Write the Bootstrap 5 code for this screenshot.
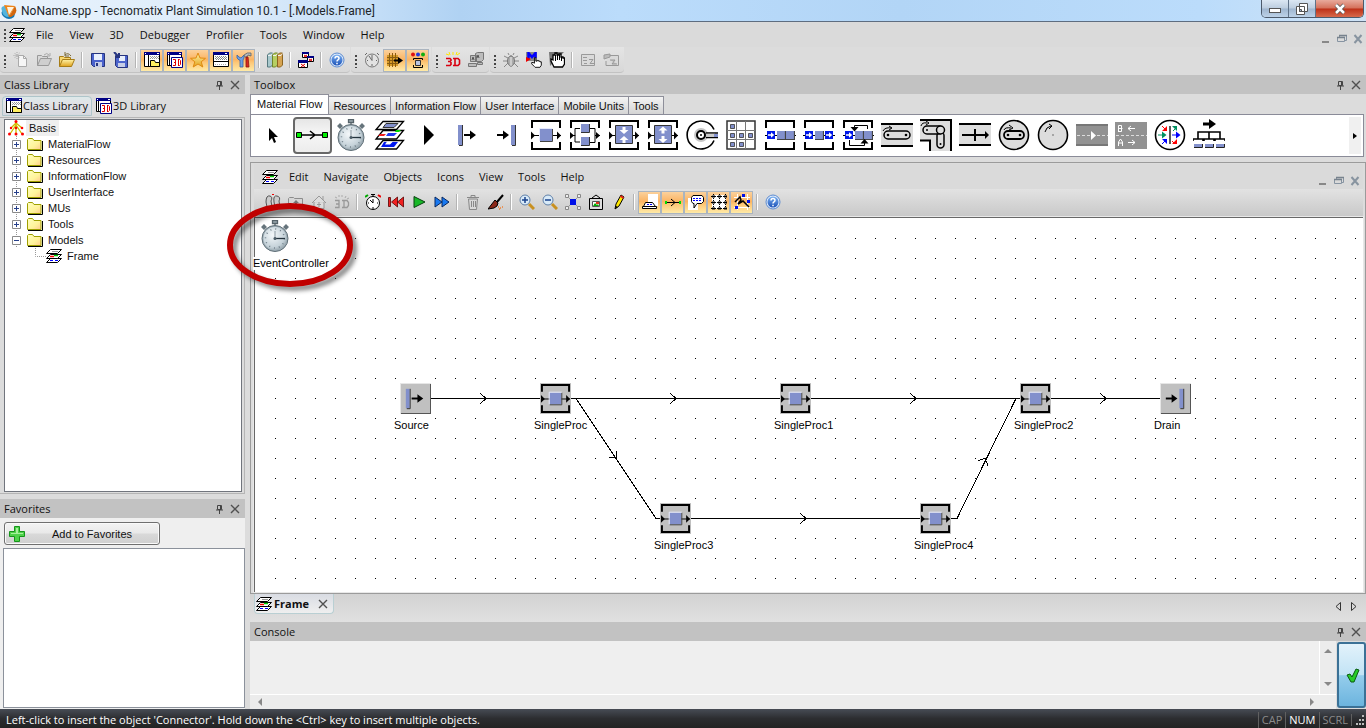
<!DOCTYPE html>
<html lang="en">
<head>
<meta charset="utf-8">
<meta name="viewport" content="width=device-width, initial-scale=1">
<title>NoName.spp - Tecnomatix Plant Simulation 10.1</title>
<link href="https://cdn.jsdelivr.net/npm/bootstrap@5.3.0/dist/css/bootstrap.min.css" rel="stylesheet">
<style>
:root{--ui:"Open Sans","Noto Sans",sans-serif;--classic:"Liberation Sans",Arial,sans-serif}
body{font-family:var(--ui);font-size:11px;line-height:16px;color:#111;background:#dcdcdc}
svg{display:block;flex:none;overflow:visible}
.ic{width:16px;height:16px}
.plain{border:0;background:none;padding:0;display:flex;align-items:center;justify-content:center;width:16px;height:16px}

/* title bar */
.titlebar{height:22px;font-family:Roboto,var(--ui);font-size:12px;padding-left:1px;border-bottom:1px solid #5e6d80;background:linear-gradient(90deg,#e9f3fc 0,#dcebfa 240px,#c2ddf7 380px,#b0d2f3 460px,#bbdcfb 620px,#b2d5f6 900px,#bbdcfb 1200px,#cfe3f6 100%)}
.winbtns{height:18px;margin-right:2px;border:1px solid #4c5a6b;border-top:0;border-radius:0 0 5px 5px;overflow:hidden}
.winbtns button{border:0;padding:0;height:17px;width:27px;border-right:1px solid #5f7288;background:linear-gradient(#dbe7f3,#bccddf 48%,#9fb6cf 52%,#bdd2e8);display:flex;align-items:center;justify-content:center}
.winbtns button:last-child{width:47px;border-right:0;background:linear-gradient(#e8aa9c,#d4705a 48%,#bd3018 52%,#d7694b)}

/* menus and toolbars */
.menurow{height:25px;background:#dadada}
.menurow .nav{gap:2px}
.framewin .menurow .nav{gap:1px}
.menurow .nav-link{padding:0 7px;color:#111;line-height:24px}
.grip{width:9px;height:14px;align-self:center;background:radial-gradient(circle,#444 1px,transparent 1px) 3px 0/4px 4px repeat-y}
.toolrow{height:27px;background:#dcdcdc}
.band{height:26px;padding:2px 2px 0 0;background:linear-gradient(#e4e4e4,#d8d8d8);border-bottom:1px solid #c2c2c2;border-radius:0 0 4px 4px;margin-right:1px}
.tool{width:23px;height:23px;padding:2px 0 0 3px;border:1px solid transparent;border-radius:0;background:none;display:flex}
.tool.on{border-color:#aab4bf;background:linear-gradient(#fbd19c,#fbb463 45%,#fdc878 60%,#ffeaa6)}
.vsep{width:8px;height:16px;border:0;opacity:1;margin:3px 0 0;background:linear-gradient(90deg,transparent 3px,#b4b4b4 3px 4px,#fff 4px 5px,transparent 5px)}

/* docked panes */
.side{width:245px}
.desk{min-height:0;padding-top:1px}
.panehead{height:19px;flex:none;padding:0 2px 0 4px;background:#c2c2c2}
.panehead h2{font-size:11px;line-height:18px;margin:0;font-weight:400}
.sidetabs{height:21px;margin-top:2px;padding-left:2px}
.sidetabs .nav-link{padding:0 3px 0 3px;height:20px;color:#111;border:1px solid transparent;display:flex;align-items:center;gap:1px;white-space:nowrap}
.sidetabs .nav-link.active{background:linear-gradient(#dde9ea,#e2e2e6 40%,#d6d8df);border-color:#aec5ca;border-radius:4px 4px 0 0}
.treebox{border:1px solid #b5b5b5;padding:1px;border-left:0}
.tree{background:#fff;border:1px solid #71757d;font-family:var(--classic);margin:0 1px 0 3px}
.tree ul{list-style:none;margin:0;padding:0}
.tree li>div{height:16px;display:flex;align-items:center;padding-left:3px}
.tree span{padding-left:5px}
.tree .rootname{background:#efefef;padding:0 3px;margin-left:2px}
.tree .branch div{padding-left:7px}
.branch{background:repeating-linear-gradient(#999 0 1px,transparent 1px 2px) 11px 0/1px 112px no-repeat}
.knob{width:9px;height:9px;margin-right:6px}
.elbow{margin-left:23px}
.favpane{height:210px;margin-top:5px;background:#efefef}
.addfav{width:156px;height:23px;margin:4px 0 3px 4px;padding:0;font-size:11px;line-height:16px;font-family:var(--classic);border:1px solid #6f6f6f;border-radius:3px;background:linear-gradient(#f3f3f3,#e9e9e9 48%,#d9d9d9 52%,#cfcfcf);box-shadow:inset 0 0 0 1px #fafafa;display:flex;align-items:center;color:#111}
.favlist{background:#fff;border:1px solid #8b919b;margin:0 0 1px 3px}

/* toolbox */
.work{min-width:0;margin-left:1px}
.tbtabs{height:20px;font-family:var(--classic)}
.tbtabs .nav-link{height:18px;line-height:18px;padding:0 4px;color:#111;border:1px solid #8e8f9a;border-bottom:0;background:linear-gradient(#f4f4f4,#e4e4e4 50%,#d4d4d4);white-space:nowrap}
.tbtabs .nav-item+.nav-item .nav-link{border-left:0}
.tbtabs .nav-link.active{height:20px;line-height:18px;padding:0 6px;background:#fff;border-color:#8e8f9a}
.toolbox{height:43px;margin-right:2px;background:#fff;border:1px solid #8a8b98;padding:2px 2px 2px 3px}
.pal{width:39px;height:37px;flex:none;padding:0 0 0 1px;border:2px solid transparent;border-radius:4px;background:none;display:flex}
.pal.on{border-color:#686868;background:linear-gradient(#e6e6e6,#f6f6f6 45%,#ececec)}
.pal svg{width:32px;height:32px}
.more{width:12px;border:0;padding:0;background:#f0f0f0;display:flex;align-items:center;justify-content:center}

/* frame window */
.framewin{margin-top:5px;border:1px solid #9b9b9b;padding:1px 2px 1px 3px;background:#dcdcdc}
.frametools{height:28px;padding:2px 0 0 7px;background:linear-gradient(#e2e2e2,#c8c8c8)}
.plane{position:relative;background:#fff;border:solid #686868;border-width:1px 0 0 1px;box-shadow:0 0 0 1px #e8e8e8}
.wires{position:absolute;left:0;top:0;width:100%;height:100%}
.node{position:absolute;left:var(--x);top:var(--y);font-family:var(--classic);color:#000}
.node svg{width:32px;height:32px}
.node .tile{width:31px;height:31px;background:#c0c0c0}
.node .edge{box-shadow:inset 1px 1px #e6e6e6,inset -1px -1px #555}
.node span{display:block;background:#fff;margin:5px 0 0 -6px;line-height:13px;height:13px;white-space:nowrap}
.ring{position:absolute;left:-32px;top:-20px;z-index:5;pointer-events:none;filter:drop-shadow(4px 4px 2px rgba(0,0,0,.45))}
.doctabs{height:28px;padding:0 4px 0 4px;background:linear-gradient(#d2d2d2,#e0e0e0)}
.doctab{height:20px;padding:0 2px 0 1px;gap:2px;border:1px solid #b9cfd3;border-top:0;border-radius:0 0 4px 4px;background:linear-gradient(#d9dce3,#efefef);font-weight:700}

/* console and status bar */
.console{height:87px}
.consoletext{border:0;resize:none;background:#efefef;padding:2px;outline:0;width:100%}
.sb{background:#ececec}
.hbar{height:15px;padding-right:22px}
.okbtn{width:29px;margin:1px 0 1px 1px;padding:0;border:2px solid #3b7196;border-radius:3px;background:linear-gradient(#e2f2fb,#c2e3f5 50%,#95cdec 51%,#6cb4de);display:flex;align-items:center;justify-content:center}
.status{height:19px;background:linear-gradient(#474c55,#2c2d30 50%,#232323);color:#fff;padding:2px 0 0 6px}
.status .key{color:#8b8b8b;border-left:1px solid #606060;padding:0 3px;line-height:16px}
.status .key:last-child{padding:0 0 0 2px}
</style>
</head>
<body class="d-flex flex-column vh-100 overflow-hidden">

<svg width="0" height="0" class="position-absolute" aria-hidden="true"><defs>
<radialGradient id="g-glass" cx=".4" cy=".35" r=".75"><stop offset="0" stop-color="#f4f8fa"/><stop offset=".7" stop-color="#c5d2d9"/><stop offset="1" stop-color="#8b9aa2"/></radialGradient>
<linearGradient id="g-gold" x2="0" y2="1"><stop stop-color="#fff3a8"/><stop offset="1" stop-color="#e0a21c"/></linearGradient>
<linearGradient id="g-help" x2="0" y2="1"><stop stop-color="#7db2f2"/><stop offset="1" stop-color="#1b52b8"/></linearGradient>
<linearGradient id="g-fold" x2="1" y2="1"><stop stop-color="#ffffc0"/><stop offset=".6" stop-color="#fff39a"/><stop offset="1" stop-color="#ffc890"/></linearGradient>

<symbol id="i-logo" viewBox="0 0 16 16"><path d="M3 5Q-2 10 3 14q5 4 10 0l1-3-6 1z" fill="#1478b4"/><path d="M1 8q-2-5 3-5l4 11q-6 0-7-6z" fill="#54b4dc"/><path d="M3 2l11 1-6 11z" fill="#ef8418"/><path d="M6 4l7 0-5 8z" fill="#fff3dc"/><path d="M14 3q4 7-4 11l-2 0z" fill="#d4680e"/></symbol>
<symbol id="i-frame" viewBox="0 0 16 16"><g stroke="#000" fill="#fff"><path d="M4.500 10.500h11l-4 4h-11z"/><path d="M4.500 6.500h11l-4 4h-11z"/><path d="M4.500 1.500h11l-4 4h-11z"/></g><path d="M6 3.500h6" stroke="#999"/><path d="M4 8.500h4" stroke="#f00" stroke-width="1.500"/><path d="M8 7.500h4" stroke="#0c0" stroke-width="1.500"/><path d="M4 12.500h3m2 0h3" stroke="#00f"/></symbol>
<symbol id="i-new" viewBox="0 0 16 16"><path d="M5.500 3.500h5l3 3v8h-8z" fill="#f6f6f6" stroke="#aaa"/><path d="M10.500 3.500v3h3" fill="none" stroke="#aaa"/><path d="M4 0v7M.5 3.500h7M1.500 1l5 5m0-5l-5 5" stroke="#a8a8a8" stroke-dasharray="1 1"/></symbol>
<symbol id="i-opengray" viewBox="0 0 16 16"><path d="M1.500 13.500v-10h4l1 1h5v2" fill="#d8d8d8" stroke="#999"/><path d="M1.500 13.500l3-7h11l-3 7z" fill="#cfcfcf" stroke="#999"/><path d="M8 3q3-3 5 0m1-2v3h-3" fill="none" stroke="#aaa"/></symbol>
<symbol id="i-open" viewBox="0 0 16 16"><path d="M.5 14.500v-10h4l1 1h6v3" fill="#f7d66e" stroke="#a67c17"/><path d="M.5 14.500l3-7h12l-3 7z" fill="url(#g-gold)" stroke="#a67c17"/><path d="M6 3q3-3 6 1m-6-4v4h4" fill="none" stroke="#7b6a38"/></symbol>
<symbol id="i-save" viewBox="0 0 16 16"><path d="M1.500 1.500h13v13h-11l-2-2z" fill="#4a62cc" stroke="#26347f"/><path d="M4 2h8v6H4z" fill="#e8effc"/><path d="M5 10h7v5H5z" fill="#c6cde6"/><path d="M6 11h2v3H6z" fill="#26347f"/></symbol>
<symbol id="i-saveas" viewBox="0 0 16 16"><path d="M2.500 3.500h12v12h-10l-2-2z" fill="#4c64cc" stroke="#26347f"/><path d="M6 4h6v5H6z" fill="#e8effc"/><path d="M5 11h7v4H5z" fill="#c6cde6"/><path d="M1 0l5 5m0-4v4H2" stroke="#26347f" stroke-width="2" fill="none"/></symbol>
<symbol id="i-lib" viewBox="0 0 16 16"><path d="M.5.5h15v14H.5z" fill="#fff" stroke="#000"/><path d="M0 0h16v3H0z" fill="#000084"/><path d="M1 1.500h1m11 0h2" stroke="#fff"/><path d="M4.500 3v12" stroke="#000"/><path d="M6 4.500h9M7 5.500h8M6 6.500h9" stroke="#999" stroke-dasharray="1 1"/><path d="M6.500 14.500v-6h4l1 2h4v4z" fill="#ffef60" stroke="#000"/></symbol>
<symbol id="i-lib3d" viewBox="0 0 16 16"><path d="M.5.5h14v13H.5z" fill="#fff" stroke="#000"/><path d="M0 0h15v3H0z" fill="#000084"/><path d="M1 1.500h1m10 0h2" stroke="#fff"/><path d="M2.500 3v11" stroke="#000"/><path d="M4.500 5.500h11v10h-11z" fill="#fff" stroke="#000084"/><path d="M6 7.500h2.500v6H6m1-3h1.500M11.500 7v7m0-6.500h1l1 1v4l-1 1h-1" fill="none" stroke="#e00000"/></symbol>
<symbol id="i-star" viewBox="0 0 16 16"><path d="M8 1l2 5 5.500.3-4.300 3.500L12.800 15 8 12l-4.800 3 1.600-5.200L.5 6.300 6 6z" fill="url(#g-gold)" stroke="#e08a10"/></symbol>
<symbol id="i-win" viewBox="0 0 16 16"><path d="M.5.5h15v14H.5z" fill="#fff" stroke="#000"/><path d="M0 0h16v3H0z" fill="#000084"/><path d="M12 1.500h2" stroke="#fff"/><path d="M2 4.500h12M3 5.500h12M2 6.500h12M3 7.500h12" stroke="#888" stroke-dasharray="1 1"/><path d="M1 9.500h14" stroke="#000"/><path d="M2 12.500h12" stroke="#aaa" stroke-dasharray="1 1"/></symbol>
<symbol id="i-tools" viewBox="0 0 16 16"><path d="M1 3v3l2 2h1v7h3V8l1-2V3L6 5 5 6 3 5z" fill="#6f9fe0" stroke="#3663a8" stroke-width=".8"/><path d="M8 3q3-3 7-2v3l-3-1-1 2H9z" fill="#b4bac0" stroke="#5c6268" stroke-width=".8"/><path d="M10 5h2l1 10h-3z" fill="#d62a20" stroke="#90140c" stroke-width=".8"/></symbol>
<symbol id="i-books" viewBox="0 0 16 16"><path d="M.5 3l2-2h3v12l-2 2h-3z" fill="#a8c8cc" stroke="#55787e"/><path d="M5.500 3l2-2h3v12l-2 2h-3z" fill="#b6cf62" stroke="#70852a"/><path d="M10.500 3l2-2h3v12l-2 2h-3z" fill="#d6a452" stroke="#8c6420"/><path d="M1 3.500h3l1.500-2M6 3.500h3l1.500-2M11 3.500h3l1.500-2" fill="none" stroke="#eee"/></symbol>
<symbol id="i-wins" viewBox="0 0 16 16"><g fill="#fff" stroke="#000"><path d="M4.500.5h6v5h-6zM9.500 4.500h6v5h-6zM.5 8.500h9v7h-9z"/></g><path d="M4 0h7v2H4zM9 4h7v2H9zM0 8h10v3H0z" fill="#000084"/><path d="M6 3l3 2m0-2l-3 2m5 2l3 2m0-2l-3 2M3 12l4 3m0-3l-4 3" stroke="#e00000"/></symbol>
<symbol id="i-help" viewBox="0 0 16 16"><circle cx="8" cy="8" r="7" fill="#dfeaf9" stroke="#5c8bd0"/><circle cx="8" cy="8" r="5.500" fill="url(#g-help)"/><path d="M6 6.500q0-2 2-2t2 1.800q0 1-1 1.600t-1 1.600M8 10.800v1.500" fill="none" stroke="#fff" stroke-width="1.500"/></symbol>
<symbol id="i-clockg" viewBox="0 0 16 16"><circle cx="8" cy="8.500" r="6.500" fill="#e2e2e2" stroke="#777"/><path d="M8 8.500L5 4m3 4.500V3M1 3l2-2m10 0l2 2M8 12v2M3 8.500h1m8 0h1" stroke="#666" fill="none"/></symbol>
<symbol id="i-chip" viewBox="0 0 16 16"><path d="M0 3h11v11H0z" fill="#d79b28"/><path d="M2.500 1v14M5.500 1v14M8.500 1v14M0 5.500h11M0 8.500h8M0 11.500h11" stroke="#8a5c10"/><path d="M7 8.500h5" stroke="#000" stroke-width="2"/><path d="M11 5l5 3.500-5 3.500z"/></symbol>
<symbol id="i-stat" viewBox="0 0 16 16"><circle cx="3" cy="2.500" r="2" fill="#e01010"/><circle cx="8" cy="2.500" r="2" fill="#2038e0"/><circle cx="13" cy="2.500" r="2" fill="#10b010"/><path d="M3.500 8V6.500h9V8M3.500 13v2.500h9V13" fill="none" stroke="#000"/><path d="M5.500 8.500h5v5h-5z" fill="#b9c4e0" stroke="#333"/></symbol>
<symbol id="i-3d" viewBox="0 0 16 16"><path d="M1 2l3 1m0-3l1 3m3-3v3m4-3l-1 3m4-2l-3 2" stroke="#ffe800"/><path d="M1 6.500h4l1 1v1l-1 1H3m2 0l1 1v2l-1 1H1M8 6.500h5l1.500 1.500v4L13 13.500H8M10 6.500v7" fill="none" stroke="#d80010" stroke-width="1.600"/></symbol>
<symbol id="i-boxes" viewBox="0 0 16 16"><g fill="#bcbcbc" stroke="#777"><path d="M7.500 1.500l2-1h6v7l-2 2h-6zM2.500 3.500h6v6h-6zM9.500 10.500h5v2h-5zM.5 11.500h8v3h-8z"/></g><path d="M4 8l1-3 1 3m3-2l1-3 1 3" stroke="#555" fill="none"/></symbol>
<symbol id="i-bug" viewBox="0 0 16 16"><path d="M8 3v12M5 6L1 4m4 5H0m5 2l-4 4m10-9l4-2m-4 5h5m-5 2l4 4M6 3L5 1m5 2l1-2" stroke="#888" fill="none"/><ellipse cx="8" cy="9" rx="3.500" ry="5" fill="#aaa" stroke="#777"/><path d="M8 5v9" stroke="#eee"/></symbol>
<symbol id="i-hand" viewBox="0 0 16 16"><path d="M5 14L1 10V8h2l2 1V1h2v5h2V5h2v1h2v1h2v5l-2 3H6z" fill="#fff" stroke="#000" stroke-width="1.300"/></symbol>
<symbol id="i-mhand" viewBox="0 0 16 16"><path d="M0 0h11v9H0z" fill="#888"/><path d="M2.500 7V1L6 5l3.500-4v5" fill="none" stroke="#00f" stroke-width="2.500"/><path d="M0 5l5 2-5 3z" fill="#e00"/><use href="#i-hand" x="5" y="5" width="11" height="11"/></symbol>
<symbol id="i-hands" viewBox="0 0 16 16"><path d="M0 0h15L1 14z" fill="#777"/><path d="M5 15L2 9V7l2 1V3h2V1h2v2h2V2h2v3h2v1h1.500v6l-2 3H6z" fill="#fff" stroke="#000" stroke-width="1.300"/><path d="M6.500 3v6m2-6v5m2-5v5m2-3v4" stroke="#000"/></symbol>
<symbol id="i-zz" viewBox="0 0 16 16"><path d="M1.500 2.500h13v11h-13z" fill="#dadada" stroke="#999"/><path d="M3 5.500h4M3 8.500h4m2-1h4l-3 4h4M4 11.500h3" stroke="#999" fill="none"/></symbol>
<symbol id="i-zz2" viewBox="0 0 16 16"><path d="M7 3.500h8.500v10H3V9" fill="#dadada" stroke="#999"/><path d="M1 3l6-1v3L1 7zm6 5h5l-3 4h5" stroke="#999" fill="#bbb"/></symbol>
<symbol id="i-pin" viewBox="0 0 10 10"><path d="M3.500 1.500h4v4h-4zM2 6h7M5.500 6v4M6.500 1v4" fill="none" stroke="#444"/></symbol>
<symbol id="i-x" viewBox="0 0 10 10"><path d="M1 1l8 8M9 1L1 9" stroke="#505050" stroke-width="1.400"/></symbol>
<symbol id="i-mdimin" viewBox="0 0 10 10"><path d="M1 8h7" stroke="#888" stroke-width="2"/></symbol>
<symbol id="i-mdirest" viewBox="0 0 10 10"><path d="M2.500 3V1.500h7v5H7.500M.5 3.500h7v4h-7z" fill="none" stroke="#8794a2"/><path d="M2 1.500h8M0 3.500h8" stroke="#77828d" stroke-width="1.500"/></symbol>
<symbol id="i-mdix" viewBox="0 0 10 10"><path d="M1.500 1l7 8m0-8l-7 8" stroke="#8894a0" stroke-width="2"/></symbol>
<symbol id="i-root" viewBox="0 0 16 16"><path d="M8 2v11M8 5L2 14M8 5l6 9M8 3l6 5M8 3L3 8" stroke="#d0bc00" stroke-width="1.300"/><g fill="#f00"><circle cx="8" cy="1.500" r="1.500"/><circle cx="8" cy="8" r="1.300"/><circle cx="14" cy="8" r="1.300"/><circle cx="3" cy="8" r="1.200"/><circle cx="1.500" cy="14" r="1.500"/><circle cx="8" cy="14" r="1.500"/><circle cx="14.500" cy="14" r="1.500"/></g></symbol>
<symbol id="i-folder" viewBox="0 0 16 16"><path d="M.5 3.500l1-1h4l1.500 2h7v9H.5z" fill="url(#g-fold)" stroke="#a0a000"/><path d="M1 14.500h14.500V5" fill="none" stroke="#000"/></symbol>
<symbol id="i-plus" viewBox="0 0 9 9"><path d="M.5.5h8v8h-8z" fill="#fff" stroke="#8a8a8a"/><path d="M2 4.500h5M4.500 2v5" stroke="#27408b"/></symbol>
<symbol id="i-minus" viewBox="0 0 9 9"><path d="M.5.5h8v8h-8z" fill="#fff" stroke="#8a8a8a"/><path d="M2 4.500h5" stroke="#27408b"/></symbol>
<symbol id="i-add" viewBox="0 0 16 16"><path d="M5.500.5h5v5h5v5h-5v5h-5v-5h-5v-5h5z" fill="#4fd24a" stroke="#15951a"/><path d="M7 2h2v5h5v1H2V7h5z" fill="#a6f09c"/></symbol>
<symbol id="i-ptr" viewBox="0 0 32 32"><path d="M12 9v13l3-3 2 5 2-1-2-5h4z" fill="#000"/></symbol>
<symbol id="i-conn" viewBox="0 0 32 32"><path d="M4 16h24M14 12l5 4-5 4" fill="none" stroke="#000" stroke-width="1.500"/><path d="M.5 13.500h5v5h-5zM26.500 13.500h5v5h-5z" fill="#0e0" stroke="#000"/></symbol>
<symbol id="i-watch" viewBox="0 0 32 32"><path d="M13.500.5h5v3h-5zM16 3v4" stroke="#56636a" fill="#9caab0" stroke-width="1.300"/><path d="M2 7l3-3 3 3-3 3zM30 7l-3-3-3 3 3 3z" fill="#66747c"/><circle cx="16" cy="18.500" r="13" fill="#9fafb8"/><circle cx="16" cy="18.500" r="13" fill="none" stroke="#5f6e76"/><circle cx="16" cy="18.500" r="11.500" fill="url(#g-glass)"/><circle cx="16" cy="18.500" r="9.500" fill="none" stroke="#71808a" stroke-width="1.500" stroke-dasharray="1 3.970"/><path d="M16 11v7.500" stroke="#8b98a0" fill="none"/><path d="M15 18.500h11" stroke="#24343e" stroke-width="1.300"/><circle cx="16" cy="18.500" r="1.500" fill="#4d5e68"/></symbol>
<symbol id="i-layers" viewBox="0 0 32 32"><g fill="#fff" stroke="#000" stroke-width="1.300"><path d="M9 21.500h20.500l-7 8.500H2z"/><path d="M9 11.500h20.500l-7 8.500H2z"/><path d="M9 2.500h20.500l-7 8H2z"/></g><path d="M12 4.500h12l-4 4H9z" fill="#8290cc" stroke="#333"/><path d="M6 15h6l-2 2H4z" fill="#f02020"/><path d="M14 14h9l-3 3h-8z" fill="#2038f0"/><path d="M22 11h5l-2 2h-4z" fill="#0d0"/><path d="M10 23h14l-4 5H7z" fill="#0018f0"/><path d="M13 22.500h6l-3 3h-5z" fill="#fff"/></symbol>
<symbol id="i-play" viewBox="0 0 32 32"><path d="M11 6l10 10-10 10z"/></symbol>
<symbol id="i-src" viewBox="0 0 32 32"><path d="M6 6h4v20H6z" fill="#8290cc"/><path d="M10.500 6v20.500H7" stroke="#333" fill="none"/><path d="M12 16h8" stroke="#000" stroke-width="2"/><path d="M18 11.500l6 4.500-6 4.500z"/></symbol>
<symbol id="i-drn" viewBox="0 0 32 32"><path d="M20 6h4v20h-4z" fill="#8290cc"/><path d="M24.500 6v20.500H21" stroke="#333" fill="none"/><path d="M6 16h7" stroke="#000" stroke-width="2"/><path d="M12 11.500l6 4.500-6 4.500z"/></symbol>
<symbol id="i-brk" viewBox="0 0 32 32"><path d="M2 9V2h28v7M2 23v7h28v-7" fill="none" stroke="#000" stroke-width="2"/></symbol>
<symbol id="i-arrs" viewBox="0 0 32 32"><path d="M1 16.500h30" stroke="#000"/><path d="M1 12.500l4 4-4 4zM27 12.500l4 4-4 4z"/></symbol>
<symbol id="i-sp" viewBox="0 0 32 32"><use href="#i-brk"/><use href="#i-arrs"/><path d="M10 10h12v12H10z" fill="#8290cc"/><path d="M22.500 10v12.500H10" fill="none" stroke="#444"/><path d="M9.500 22V9.500h13" fill="none" stroke="#e6eaff"/></symbol>
<symbol id="i-pp" viewBox="0 0 32 32"><use href="#i-brk"/><path d="M1 16.500h5v-7h5M6 16v7h5M21 9.500h5v14h-5m5-7h5" fill="none" stroke="#000"/><path d="M1 13l4 3.500L1 20zM27 13l4 3.500-4 3.500z"/><path d="M12 5h8v8h-8zM12 18h8v8h-8z" fill="#8290cc"/><path d="M20.500 5v8.500H12M20.500 18v8.500H12" stroke="#333" fill="none"/></symbol>
<symbol id="i-asm" viewBox="0 0 32 32"><use href="#i-brk"/><use href="#i-arrs"/><path d="M7.500 6.500h17v18h-17z" fill="#8290cc" stroke="#333"/><path d="M14.500 8h3v3h3L16 15l-4.500-4h3zM14.500 24h3v-3h3L16 17l-4.500 4h3z" fill="#fff"/></symbol>
<symbol id="i-dis" viewBox="0 0 32 32"><use href="#i-brk"/><use href="#i-arrs"/><path d="M7.500 6.500h17v18h-17z" fill="#8290cc" stroke="#333"/><path d="M14.500 14.500h3v-3h3L16 7.500l-4.500 4h3zM14.500 17h3v3h3L16 24l-4.500-4h3z" fill="#fff"/></symbol>
<symbol id="i-pick" viewBox="0 0 32 32"><path d="M28 10.500a14 14 0 1 0 0 11" fill="none" stroke="#000" stroke-width="1.600"/><circle cx="15" cy="16" r="7" fill="#c8c8c8"/><circle cx="15" cy="16" r="4" fill="#fff" stroke="#000" stroke-width="2"/><circle cx="15" cy="16" r="1"/><path d="M20 14h12M20 18.500h12" stroke="#000" stroke-width="1.500"/><path d="M20 16.300h9" stroke="#ccc" stroke-width="3"/><path d="M28 15h4v3h-4z" fill="#8290cc"/></symbol>
<symbol id="i-store" viewBox="0 0 32 32"><path d="M2 2h28v28H2z" fill="#fff" stroke="#333" stroke-width="1.500"/><path d="M11.500 2v28M20.500 2v28M2 11.500h28M2 20.500h28" stroke="#777"/><path d="M5.500 5.500h4v4h-4zM5.500 14.500h4v4h-4zM14.500 14.500h4v4h-4zM23.500 14.500h4v4h-4zM5.500 23.500h4v4h-4zM14.500 23.500h4v4h-4z" fill="#8290cc" stroke="#333" stroke-width=".8"/></symbol>
<symbol id="i-barr" viewBox="0 0 8 8"><path d="M0 0h8v8H0z" fill="#0018e8"/><path d="M1 3.300h3V1.200L7.200 4 4 6.800V4.700H1z" fill="#fff"/></symbol>
<symbol id="i-bsq" viewBox="0 0 8 8"><path d="M0 0h8v8H0z" fill="#8290cc"/><path d="M7.500 0v7.500H0" fill="none" stroke="#444"/></symbol>
<symbol id="i-l1" viewBox="0 0 32 32"><use href="#i-brk"/><path d="M1 16.500h31" stroke="#000"/><use href="#i-barr" x="3" y="12" width="8" height="8"/><use href="#i-bsq" x="13" y="12" width="9" height="9"/><use href="#i-bsq" x="22" y="12" width="9" height="9"/></symbol>
<symbol id="i-l2" viewBox="0 0 32 32"><use href="#i-brk"/><path d="M0 16.500h32" stroke="#000"/><use href="#i-barr" x="2" y="12" width="8" height="8"/><use href="#i-bsq" x="12" y="12" width="9" height="9"/><use href="#i-barr" x="22" y="12" width="8" height="8"/></symbol>
<symbol id="i-l3" viewBox="0 0 32 32"><use href="#i-l1"/><path d="M25.500 10V6.500h-13V9M7.500 21v5.500h15V24" fill="none" stroke="#000"/><path d="M8.500 8h8l-4 4.500zM18.500 24.500h8l-4-4.500z"/></symbol>
<symbol id="i-conv" viewBox="0 0 32 32"><path d="M0 5h32v22H0z" fill="#ddd"/><path d="M0 5h32M0 27h32" stroke="#000" stroke-width="2"/><rect x="3" y="12" width="26" height="8" rx="4" fill="none" stroke="#000" stroke-width="1.500"/><circle cx="7" cy="16" r="1.300"/><circle cx="25" cy="16" r="1.300"/><path d="M2 12q2-4 8-3m-2-2l3 2-3 2" fill="none" stroke="#000"/></symbol>
<symbol id="i-ang" viewBox="0 0 32 32"><path d="M0 1h31v31H10V21H0z" fill="#ddd"/><path d="M0 1h31v31M0 21.500h10V32" fill="none" stroke="#000" stroke-width="2"/><rect x="3" y="7" width="20" height="8" rx="4" fill="none" stroke="#000" stroke-width="1.500"/><rect x="17" y="13" width="7" height="16" rx="3.500" fill="none" stroke="#000" stroke-width="1.500"/><circle cx="20.500" cy="11" r="4" fill="#ddd" stroke="#000" stroke-width="1.500"/><circle cx="7" cy="11" r="1"/><circle cx="20.500" cy="25" r="1"/><path d="M1 7q1-4 6-3M6 2l3 2-3 2" stroke="#000" fill="none"/></symbol>
<symbol id="i-cross" viewBox="0 0 32 32"><path d="M0 5h32v22H0z" fill="#ddd"/><path d="M0 5h32M0 26h32" stroke="#000" stroke-width="2"/><path d="M3 16h24M16 10v12" stroke="#000" stroke-width="2"/><path d="M26 12l4 4-4 4z"/></symbol>
<symbol id="i-turn" viewBox="0 0 32 32"><circle cx="16" cy="16" r="14.500" fill="#ddd" stroke="#000" stroke-width="1.600"/><rect x="6" y="12" width="20" height="8" rx="4" fill="none" stroke="#000" stroke-width="1.800"/><circle cx="10" cy="16" r="1.300"/><circle cx="22" cy="16" r="1.300"/><path d="M6 11q1-3 7-2m-2-3l4 3-4 2" fill="none" stroke="#000"/></symbol>
<symbol id="i-table" viewBox="0 0 32 32"><circle cx="16" cy="16" r="14.500" fill="#ddd" stroke="#000" stroke-width="1.600"/><path d="M8 13q1-5 6-6M12 5l3 2-3 3" fill="none" stroke="#000"/><path d="M15.500 15.500h1v1h-1z"/></symbol>
<symbol id="i-road" viewBox="0 0 32 32"><path d="M0 5h32v22H0z" fill="#929292"/><path d="M0 6h32M0 26h32" stroke="#777" stroke-width="2"/><path d="M1 16.500h31" stroke="#ddd" stroke-dasharray="3 2"/><path d="M15 12l5 4.500-5 4.500z" fill="#fff"/></symbol>
<symbol id="i-road2" viewBox="0 0 32 32"><path d="M0 3h32v27H0z" fill="#929292"/><path d="M1 16.500h31" stroke="#ddd" stroke-dasharray="3 2"/><path d="M3.500 13V6.500h3v6h-3m0-3h4M3.500 27v-4l2-3 2 3v4m-4-3h4M13 9.500h7M16 7l-3 2.500 3 2.500M13 23.500h7M17 21l3 2.500-3 2.500" fill="none" stroke="#fff"/></symbol>
<symbol id="i-flow" viewBox="0 0 32 32"><circle cx="16" cy="16" r="14.500" fill="#fff" stroke="#000" stroke-width="1.600"/><path d="M16 7v18" stroke="#000" stroke-width="1.300"/><path d="M8 7l3 3M18 22l3 3" stroke="#f00"/><path d="M13 7v5H8zM23 20v5h-5z" fill="#f00"/><path d="M4 16h4M19 12l3-3" stroke="#009060"/><path d="M8 12.500l4.500 3.500L8 19.500zM18 7h5v5z" fill="#009060"/><path d="M18 16h4M8 25l3-3" stroke="#00f"/><path d="M22 12.500l4.500 3.500-4.500 3.500zM8 20h5v5z" fill="#00f"/></symbol>
<symbol id="i-tree2" viewBox="0 0 32 32"><path d="M10 5h8" stroke="#000" stroke-width="3"/><path d="M16 0l7 5-7 5z"/><path d="M5 20v-7h22v7M16 13v7M0 22v-2h10v2m1 0v-2h10v2m1 0v-2h10v2" fill="none" stroke="#000" stroke-width="1.600"/><path d="M1 25h8v3H1zM12 25h8v3h-8zM23 25h8v3h-8z" fill="#8290cc"/><path d="M1 28.500h8.500V25M12 28.500h8.500V25M23 28.500h8.500V25" stroke="#222" fill="none"/></symbol>
<symbol id="i-foot" viewBox="0 0 16 16"><path d="M1 8q0-7 4-6 3 1 1 5l1 6q-3 3-5 0zM9 8q-1-7 3-6 4 1 2 5l1 6q-3 3-5 0z" fill="#ccc" stroke="#555"/><path d="M7 .5h2" stroke="#e00"/></symbol>
<symbol id="i-up" viewBox="0 0 16 16"><path d="M.5 13.500v-9l1-1h4l1 1h8v9z" fill="#d6d6d6" stroke="#8c8c8c"/><path d="M5 9l3-3 3 3H9v3H7V9z" fill="#777"/></symbol>
<symbol id="i-home" viewBox="0 0 16 16"><path d="M1 9l7-7 7 7M3 8v6.500h10V8M12 6V2" fill="#ddd" stroke="#999"/><path d="M8 8v5M6 10.500h4" stroke="#999"/></symbol>
<symbol id="i-3dg" viewBox="0 0 16 16"><path d="M1 3l2 1m2-3v2m3-2v2m4-1l-1 2m4 0l-2 1" stroke="#aaa"/><path d="M1 6.500h4v7H1m1-3.500h3M8 6.500h5l1.500 2v3l-1.500 2H8M10 6.500v7" fill="none" stroke="#999" stroke-width="1.300"/></symbol>
<symbol id="i-sw" viewBox="0 0 16 16"><circle cx="8" cy="9" r="6.500" fill="#fff" stroke="#000"/><path d="M6 .5h4M8 1v2M8 9V5m0 4L5 6M8 13v2M3 9h1m8 0h1" stroke="#000" fill="none"/><path d="M0 3l3-2" stroke="#0a0" stroke-width="2"/><path d="M13 1l3 2" stroke="#e00" stroke-width="2"/></symbol>
<symbol id="i-rew" viewBox="0 0 16 16"><path d="M.5 3.500h2v9h-2zM9.500 3v10L3.500 8zM15.500 3v10L9.500 8z" fill="#f02020" stroke="#500" stroke-width=".8"/></symbol>
<symbol id="i-go" viewBox="0 0 16 16"><path d="M3 2.500L14 8 3 13.500z" fill="#18b828" stroke="#084010"/></symbol>
<symbol id="i-ff" viewBox="0 0 16 16"><path d="M1 3l7 5-7 5zM8 3l7 5-7 5z" fill="#1878f0" stroke="#082860"/></symbol>
<symbol id="i-trash" viewBox="0 0 16 16"><path d="M3.500 5h9l-1 10.500h-7zM2 3.500h12M6 3V1.500h4V3M6.500 7v6m2-6v6m2-6v6" fill="#d8d8d8" stroke="#888"/></symbol>
<symbol id="i-broom" viewBox="0 0 16 16"><path d="M15 1L9 8" stroke="#000" stroke-width="2"/><path d="M7 6l3 3-1 3-3 2-6 1z" fill="#8c2818" stroke="#000"/><path d="M10 13h1m1 1h1m-2 1h1m2-2h1" stroke="#f08030" stroke-width="1.500"/></symbol>
<symbol id="i-zin" viewBox="0 0 16 16"><path d="M10 10l5 5" stroke="#c89020" stroke-width="3"/><circle cx="6" cy="6" r="5" fill="#d8eaf8" stroke="#6080a8"/><path d="M3 6h6M6 3v6" stroke="#18428c" stroke-width="1.500"/></symbol>
<symbol id="i-zout" viewBox="0 0 16 16"><path d="M10 10l5 5" stroke="#c89020" stroke-width="3"/><circle cx="6" cy="6" r="5" fill="#d8eaf8" stroke="#6080a8"/><path d="M3 6h6" stroke="#18428c" stroke-width="1.500"/></symbol>
<symbol id="i-fit" viewBox="0 0 16 16"><path d="M2 2l12 12M14 2L2 14" stroke="#999"/><g fill="#eee" stroke="#888"><path d="M.5.5h3v3h-3zM12.500.5h3v3h-3zM.5 12.500h3v3h-3zM12.500 12.500h3v3h-3z"/></g><path d="M5 5h6v6H5z" fill="#0010e8"/></symbol>
<symbol id="i-pic" viewBox="0 0 16 16"><path d="M4 4l4-3 4 3" fill="none" stroke="#000"/><path d="M1.500 4.500h13v11h-13z" fill="#ddd" stroke="#000"/><path d="M4.500 7.500h7v5h-7z" fill="#fff" stroke="#555"/><path d="M5 12l2-3 2 2 1-1 1 2z" fill="#0a0"/><path d="M8 8h3v2H8z" fill="#e03020"/></symbol>
<symbol id="i-pencil" viewBox="0 0 16 16"><path d="M4 15l1-5 5-9 3 2-5 9z" fill="#ffe800" stroke="#000"/><path d="M4 15l1-3 2 1z"/><path d="M9.500 2l3 2" stroke="#e02020" stroke-width="2"/></symbol>
<symbol id="i-lbl" viewBox="0 0 16 16"><path d="M6 0h10v12H6z" fill="#fff"/><path d="M3.500 8.500h7l3 4h-12zM.5 12.500h14v2H.5z" fill="#fff" stroke="#000"/><path d="M5 10.500h5" stroke="#00f" stroke-dasharray="2 1"/></symbol>
<symbol id="i-link" viewBox="0 0 16 16"><path d="M0 8.500h16M6 5l4 3.500L6 12" fill="none" stroke="#000"/><path d="M0 7h2v3H0zM14 7h2v3h-2z" fill="#0d0"/></symbol>
<symbol id="i-note" viewBox="0 0 16 16"><path d="M0 4h10v12H0z" fill="#fff"/><path d="M5 1.500h9l1.500 2v4l-2 2H9L6 14V9.500H5l-1.500-2v-4z" fill="#fff" stroke="#000"/><path d="M5 4.500h8m-8 2h8" stroke="#00f" stroke-dasharray="2 1"/></symbol>
<symbol id="i-grid" viewBox="0 0 16 16"><path d="M1 1h14v14H1z" fill="#fff"/><path d="M2.500 0v16M8.500 0v16M14.500 0v16M0 2.500h16M0 8.500h16M0 14.500h16" stroke="#000" stroke-dasharray="1 1"/><path d="M1 2.500h3M7 2.500h3M13 2.500h3M1 8.500h3M7 8.500h3M13 8.500h3M1 14.500h3M7 14.500h3M13 14.500h3" stroke="#000" stroke-width="2"/></symbol>
<symbol id="i-route" viewBox="0 0 16 16"><path d="M0 3.500h16M0 13.500h16M3.500 0v16M13.500 0v16" stroke="#fff"/><path d="M1 8l5-5 1 3-3 4 5-3 6 6" fill="none" stroke="#000" stroke-width="1.500"/><path d="M8 0h3v3H8zM13 6h3v3h-3zM1 12h3v3H1z" fill="#0010e8"/></symbol>
<symbol id="i-check" viewBox="0 0 16 16"><path d="M3 8l3-1 2 3 4-8 3 1-5 12H7z" fill="#28cc28" stroke="#0a5a10"/></symbol>
</defs></svg>

<header>
  <div class="titlebar d-flex align-items-center">
    <svg class="ic me-1"><use href="#i-logo"/></svg>
    <span class="flex-grow-1 text-nowrap text-dark">NoName.spp - Tecnomatix Plant Simulation 10.1 - [.Models.Frame]</span>
    <div class="winbtns d-flex align-self-start">
      <button type="button" aria-label="Minimize"><svg width="12" height="10"><rect x=".5" y="4.500" width="11" height="4" fill="#fff" stroke="#555"/></svg></button>
      <button type="button" aria-label="Restore"><svg width="12" height="12"><path d="M3.500.5h8v8h-8zM.5 3.500h8v8h-8z" fill="#fff" stroke="#555"/><path d="M3.500 6.500h2v2h-2z" fill="#9fb6cf" stroke="#555"/></svg></button>
      <button type="button" aria-label="Close"><svg width="12" height="10"><path d="M2 1l8 8m0-8L2 9" stroke="#555" stroke-width="4"/><path d="M2 1l8 8m0-8L2 9" stroke="#fff" stroke-width="2.500"/></svg></button>
    </div>
  </div>
  <nav class="menurow d-flex align-items-center" aria-label="Main menu">
    <span class="grip"></span><svg class="ic me-1"><use href="#i-frame"/></svg>
    <div class="nav flex-grow-1 flex-nowrap">
      <a class="nav-link" href="#">File</a><a class="nav-link" href="#">View</a><a class="nav-link" href="#">3D</a><a class="nav-link" href="#">Debugger</a><a class="nav-link" href="#">Profiler</a><a class="nav-link" href="#">Tools</a><a class="nav-link" href="#">Window</a><a class="nav-link" href="#">Help</a>
    </div>
    <div class="d-flex pt-2">
      <button class="plain" aria-label="Minimize document"><svg width="10" height="10"><use href="#i-mdimin"/></svg></button>
      <button class="plain" aria-label="Restore document"><svg width="10" height="10"><use href="#i-mdirest"/></svg></button>
      <button class="plain" aria-label="Close document"><svg width="10" height="10"><use href="#i-mdix"/></svg></button>
    </div>
  </nav>
  <div class="toolrow d-flex">
    <div class="band d-flex align-items-start" role="toolbar" aria-label="Standard">
      <span class="grip"></span>
      <button class="tool" aria-label="New"><svg class="ic"><use href="#i-new"/></svg></button>
      <button class="tool" aria-label="Open"><svg class="ic"><use href="#i-opengray"/></svg></button>
      <button class="tool" aria-label="Open model"><svg class="ic"><use href="#i-open"/></svg></button>
      <hr class="vsep">
      <button class="tool" aria-label="Save"><svg class="ic"><use href="#i-save"/></svg></button>
      <button class="tool" aria-label="Save as"><svg class="ic"><use href="#i-saveas"/></svg></button>
      <hr class="vsep">
      <button class="tool on" aria-label="Class Library"><svg class="ic"><use href="#i-lib"/></svg></button>
      <button class="tool on" aria-label="3D Library"><svg class="ic"><use href="#i-lib3d"/></svg></button>
      <button class="tool on" aria-label="Favorites"><svg class="ic"><use href="#i-star"/></svg></button>
      <button class="tool on" aria-label="Console"><svg class="ic"><use href="#i-win"/></svg></button>
      <button class="tool on" aria-label="Toolbox"><svg class="ic"><use href="#i-tools"/></svg></button>
      <hr class="vsep">
      <button class="tool" aria-label="Manage library"><svg class="ic"><use href="#i-books"/></svg></button>
      <hr class="vsep">
      <button class="tool" aria-label="Close all windows"><svg class="ic"><use href="#i-wins"/></svg></button>
      <hr class="vsep">
      <button class="tool" aria-label="Help"><svg class="ic"><use href="#i-help"/></svg></button>
    </div>
    <div class="band d-flex align-items-start" role="toolbar" aria-label="Simulation">
      <span class="grip"></span>
      <button class="tool" aria-label="Event debugger"><svg class="ic"><use href="#i-clockg"/></svg></button>
      <button class="tool on" aria-label="Animation"><svg class="ic"><use href="#i-chip"/></svg></button>
      <button class="tool on" aria-label="States"><svg class="ic"><use href="#i-stat"/></svg></button>
    </div>
    <div class="band d-flex align-items-start" role="toolbar" aria-label="3D">
      <span class="grip"></span>
      <button class="tool" aria-label="Start 3D"><svg class="ic"><use href="#i-3d"/></svg></button>
      <button class="tool" aria-label="3D objects"><svg class="ic"><use href="#i-boxes"/></svg></button>
    </div>
    <div class="band d-flex align-items-start" role="toolbar" aria-label="Debugger">
      <span class="grip"></span>
      <button class="tool" aria-label="Debug"><svg class="ic"><use href="#i-bug"/></svg></button>
      <button class="tool" aria-label="Suspend methods"><svg class="ic"><use href="#i-mhand"/></svg></button>
      <button class="tool" aria-label="Stop methods"><svg class="ic"><use href="#i-hands"/></svg></button>
      <hr class="vsep">
      <button class="tool" aria-label="Suspended"><svg class="ic"><use href="#i-zz"/></svg></button>
      <button class="tool" aria-label="Stopped"><svg class="ic"><use href="#i-zz2"/></svg></button>
    </div>
  </div>
</header>

<main class="desk d-flex flex-grow-1 gap-1">
  <aside class="side d-flex flex-column flex-shrink-0">
    <section class="d-flex flex-column flex-grow-1">
      <div class="panehead d-flex align-items-center"><h2 class="flex-grow-1">Class Library</h2>
        <button class="plain" aria-label="Pin"><svg width="10" height="10"><use href="#i-pin"/></svg></button><button class="plain" aria-label="Close"><svg width="10" height="10"><use href="#i-x"/></svg></button></div>
      <div class="nav sidetabs flex-nowrap">
        <a class="nav-link active" href="#"><svg class="ic"><use href="#i-lib"/></svg>Class Library</a>
        <a class="nav-link" href="#"><svg class="ic"><use href="#i-lib3d"/></svg>3D Library</a>
      </div>
      <div class="treebox flex-grow-1 d-flex">
        <div class="tree flex-grow-1">
          <ul>
            <li><div><svg class="ic"><use href="#i-root"/></svg><span class="rootname">Basis</span></div>
              <ul class="branch">
                <li><div><svg class="knob"><use href="#i-plus"/></svg><svg class="ic"><use href="#i-folder"/></svg><span>MaterialFlow</span></div></li>
                <li><div><svg class="knob"><use href="#i-plus"/></svg><svg class="ic"><use href="#i-folder"/></svg><span>Resources</span></div></li>
                <li><div><svg class="knob"><use href="#i-plus"/></svg><svg class="ic"><use href="#i-folder"/></svg><span>InformationFlow</span></div></li>
                <li><div><svg class="knob"><use href="#i-plus"/></svg><svg class="ic"><use href="#i-folder"/></svg><span>UserInterface</span></div></li>
                <li><div><svg class="knob"><use href="#i-plus"/></svg><svg class="ic"><use href="#i-folder"/></svg><span>MUs</span></div></li>
                <li><div><svg class="knob"><use href="#i-plus"/></svg><svg class="ic"><use href="#i-folder"/></svg><span>Tools</span></div></li>
                <li><div><svg class="knob"><use href="#i-minus"/></svg><svg class="ic"><use href="#i-folder"/></svg><span>Models</span></div>
                  <ul><li><div><svg class="elbow" width="11" height="16"><path d="M.5 0v8.500H11" fill="none" stroke="#999" stroke-dasharray="1 1"/></svg><svg class="ic"><use href="#i-frame"/></svg><span>Frame</span></div></li></ul></li>
              </ul></li>
          </ul>
        </div>
      </div>
    </section>
    <section class="favpane d-flex flex-column">
      <div class="panehead d-flex align-items-center"><h2 class="flex-grow-1">Favorites</h2>
        <button class="plain" aria-label="Pin"><svg width="10" height="10"><use href="#i-pin"/></svg></button><button class="plain" aria-label="Close"><svg width="10" height="10"><use href="#i-x"/></svg></button></div>
      <button type="button" class="btn addfav"><svg class="ic ms-1"><use href="#i-add"/></svg><span class="flex-grow-1 text-center">Add to Favorites</span></button>
      <div class="favlist flex-grow-1"></div>
    </section>
  </aside>

  <div class="work d-flex flex-column flex-grow-1">
    <section>
      <div class="panehead d-flex align-items-center"><h2 class="flex-grow-1">Toolbox</h2>
        <button class="plain" aria-label="Pin"><svg width="10" height="10"><use href="#i-pin"/></svg></button><button class="plain" aria-label="Close"><svg width="10" height="10"><use href="#i-x"/></svg></button></div>
      <ul class="nav tbtabs flex-nowrap align-items-end">
        <li class="nav-item"><a class="nav-link active" href="#">Material Flow</a></li>
        <li class="nav-item"><a class="nav-link" href="#">Resources</a></li>
        <li class="nav-item"><a class="nav-link" href="#">Information Flow</a></li>
        <li class="nav-item"><a class="nav-link" href="#">User Interface</a></li>
        <li class="nav-item"><a class="nav-link" href="#">Mobile Units</a></li>
        <li class="nav-item"><a class="nav-link" href="#">Tools</a></li>
      </ul>
      <div class="toolbox d-flex">
        <div class="d-flex flex-grow-1 overflow-hidden" role="toolbar" aria-label="Material Flow objects">
          <button class="pal" aria-label="Select"><svg><use href="#i-ptr"/></svg></button>
          <button class="pal on" aria-label="Connector"><svg><use href="#i-conn"/></svg></button>
          <button class="pal" aria-label="EventController"><svg><use href="#i-watch"/></svg></button>
          <button class="pal" aria-label="Frame"><svg><use href="#i-layers"/></svg></button>
          <button class="pal" aria-label="Interface"><svg><use href="#i-play"/></svg></button>
          <button class="pal" aria-label="Source"><svg><use href="#i-src"/></svg></button>
          <button class="pal" aria-label="Drain"><svg><use href="#i-drn"/></svg></button>
          <button class="pal" aria-label="SingleProc"><svg><use href="#i-sp"/></svg></button>
          <button class="pal" aria-label="ParallelProc"><svg><use href="#i-pp"/></svg></button>
          <button class="pal" aria-label="Assembly"><svg><use href="#i-asm"/></svg></button>
          <button class="pal" aria-label="DismantleStation"><svg><use href="#i-dis"/></svg></button>
          <button class="pal" aria-label="PickAndPlace"><svg><use href="#i-pick"/></svg></button>
          <button class="pal" aria-label="Store"><svg><use href="#i-store"/></svg></button>
          <button class="pal" aria-label="Buffer"><svg><use href="#i-l1"/></svg></button>
          <button class="pal" aria-label="PlaceBuffer"><svg><use href="#i-l2"/></svg></button>
          <button class="pal" aria-label="Sorter"><svg><use href="#i-l3"/></svg></button>
          <button class="pal" aria-label="Line"><svg><use href="#i-conv"/></svg></button>
          <button class="pal" aria-label="AngularConverter"><svg><use href="#i-ang"/></svg></button>
          <button class="pal" aria-label="Converter"><svg><use href="#i-cross"/></svg></button>
          <button class="pal" aria-label="Turntable"><svg><use href="#i-turn"/></svg></button>
          <button class="pal" aria-label="Turnplate"><svg><use href="#i-table"/></svg></button>
          <button class="pal" aria-label="Track"><svg><use href="#i-road"/></svg></button>
          <button class="pal" aria-label="TwoLaneTrack"><svg><use href="#i-road2"/></svg></button>
          <button class="pal" aria-label="FlowControl"><svg><use href="#i-flow"/></svg></button>
          <button class="pal" aria-label="Cycle"><svg><use href="#i-tree2"/></svg></button>
        </div>
        <button class="more" aria-label="More objects"><svg width="4" height="6"><path d="M0 0l4 3-4 3z"/></svg></button>
      </div>
    </section>

    <section class="framewin d-flex flex-column flex-grow-1">
      <nav class="menurow d-flex align-items-center" aria-label="Frame menu">
        <svg class="ic ms-2 me-1"><use href="#i-frame"/></svg>
        <div class="nav flex-grow-1 flex-nowrap">
          <a class="nav-link" href="#">Edit</a><a class="nav-link" href="#">Navigate</a><a class="nav-link" href="#">Objects</a><a class="nav-link" href="#">Icons</a><a class="nav-link" href="#">View</a><a class="nav-link" href="#">Tools</a><a class="nav-link" href="#">Help</a>
        </div>
        <div class="d-flex pt-2">
          <button class="plain" aria-label="Minimize frame"><svg width="10" height="10"><use href="#i-mdimin"/></svg></button>
          <button class="plain" aria-label="Restore frame"><svg width="10" height="10"><use href="#i-mdirest"/></svg></button>
          <button class="plain" aria-label="Close frame"><svg width="10" height="10"><use href="#i-mdix"/></svg></button>
        </div>
      </nav>
      <div class="frametools d-flex align-items-start flex-shrink-0" role="toolbar" aria-label="Frame tools">
        <button class="tool" aria-label="Origin"><svg class="ic"><use href="#i-foot"/></svg></button>
        <button class="tool" aria-label="Location"><svg class="ic"><use href="#i-up"/></svg></button>
        <button class="tool" aria-label="Root"><svg class="ic"><use href="#i-home"/></svg></button>
        <button class="tool" aria-label="3D view"><svg class="ic"><use href="#i-3dg"/></svg></button>
        <hr class="vsep">
        <button class="tool" aria-label="Event controller"><svg class="ic"><use href="#i-sw"/></svg></button>
        <button class="tool" aria-label="Reset"><svg class="ic"><use href="#i-rew"/></svg></button>
        <button class="tool" aria-label="Start"><svg class="ic"><use href="#i-go"/></svg></button>
        <button class="tool" aria-label="Fast forward"><svg class="ic"><use href="#i-ff"/></svg></button>
        <hr class="vsep">
        <button class="tool" aria-label="Delete"><svg class="ic"><use href="#i-trash"/></svg></button>
        <button class="tool" aria-label="Delete movable objects"><svg class="ic"><use href="#i-broom"/></svg></button>
        <hr class="vsep">
        <button class="tool" aria-label="Zoom in"><svg class="ic"><use href="#i-zin"/></svg></button>
        <button class="tool" aria-label="Zoom out"><svg class="ic"><use href="#i-zout"/></svg></button>
        <button class="tool" aria-label="Fit"><svg class="ic"><use href="#i-fit"/></svg></button>
        <button class="tool" aria-label="Background"><svg class="ic"><use href="#i-pic"/></svg></button>
        <button class="tool" aria-label="Edit graphics"><svg class="ic"><use href="#i-pencil"/></svg></button>
        <hr class="vsep">
        <button class="tool on" aria-label="Show labels"><svg class="ic"><use href="#i-lbl"/></svg></button>
        <button class="tool on" aria-label="Show connections"><svg class="ic"><use href="#i-link"/></svg></button>
        <button class="tool on" aria-label="Show comments"><svg class="ic"><use href="#i-note"/></svg></button>
        <button class="tool on" aria-label="Show grid"><svg class="ic"><use href="#i-grid"/></svg></button>
        <button class="tool on" aria-label="Show routes"><svg class="ic"><use href="#i-route"/></svg></button>
        <hr class="vsep">
        <button class="tool" aria-label="Frame help"><svg class="ic"><use href="#i-help"/></svg></button>
      </div>
      <div class="plane flex-grow-1">
        <svg class="wires" shape-rendering="crispEdges">
          <defs><pattern id="dots" width="20" height="20" patternUnits="userSpaceOnUse"><rect width="1" height="1"/></pattern></defs>
          <rect x="20" y="20" width="100%" height="352" fill="url(#dots)"/>
          <g fill="none" stroke="#000">
            <path d="M175 180.500h111M315 180.500h211M555 180.500h211M795 180.500h111M435 300.500h231M321 180.500l80 120h6M695 300.500h7l59-120"/>
            <path d="M225 175l6 5.500-6 5.500M415 175l6 5.500-6 5.500M655 175l6 5.500-6 5.500M845 175l6 5.500-6 5.500M545 295l6 5.500-6 5.500M354 239.500h7l1-6M723 242.500l7-2 3 7"/>
          </g>
        </svg>
        <div class="node" style="--x:4px;--y:2px"><svg><use href="#i-watch"/></svg><span>EventController</span></div>
        <div class="node" style="--x:145px;--y:165px"><svg class="tile edge"><use href="#i-src"/></svg><span>Source</span></div>
        <div class="node" style="--x:285px;--y:165px"><svg class="tile"><use href="#i-sp"/></svg><span>SingleProc</span></div>
        <div class="node" style="--x:525px;--y:165px"><svg class="tile"><use href="#i-sp"/></svg><span>SingleProc1</span></div>
        <div class="node" style="--x:765px;--y:165px"><svg class="tile"><use href="#i-sp"/></svg><span>SingleProc2</span></div>
        <div class="node" style="--x:905px;--y:165px"><svg class="tile edge"><use href="#i-drn"/></svg><span>Drain</span></div>
        <div class="node" style="--x:405px;--y:285px"><svg class="tile"><use href="#i-sp"/></svg><span>SingleProc3</span></div>
        <div class="node" style="--x:665px;--y:285px"><svg class="tile"><use href="#i-sp"/></svg><span>SingleProc4</span></div>
        <svg class="ring" width="136" height="96"><ellipse cx="67" cy="47" rx="60" ry="39" fill="none" stroke="#c00000" stroke-width="6"/></svg>
      </div>
    </section>
    <div class="doctabs d-flex flex-shrink-0">
      <div class="doctab d-flex align-items-center"><svg class="ic"><use href="#i-frame"/></svg>Frame<button class="plain ms-1" aria-label="Close Frame"><svg width="10" height="10"><use href="#i-x"/></svg></button></div>
      <div class="d-flex ms-auto pt-1">
        <button class="plain" aria-label="Previous"><svg width="6" height="9"><path d="M5.500.5v8L1 4.500z" fill="none" stroke="#333"/></svg></button>
        <button class="plain" aria-label="Next"><svg width="6" height="9"><path d="M.5.5v8L5 4.500z" fill="none" stroke="#333"/></svg></button>
      </div>
    </div>
    <section class="console d-flex flex-column flex-shrink-0">
      <div class="panehead d-flex align-items-center"><h2 class="flex-grow-1">Console</h2>
        <button class="plain" aria-label="Pin"><svg width="10" height="10"><use href="#i-pin"/></svg></button><button class="plain" aria-label="Close"><svg width="10" height="10"><use href="#i-x"/></svg></button></div>
      <div class="d-flex flex-grow-1">
        <div class="d-flex flex-column flex-grow-1">
          <div class="d-flex flex-grow-1">
            <textarea class="consoletext" aria-label="Console output" readonly></textarea>
            <div class="sb d-flex flex-column justify-content-between align-items-center px-1 py-2 border-start border-white">
              <svg width="8" height="4"><path d="M0 4l4-4 4 4z" fill="#888"/></svg><svg width="8" height="4"><path d="M0 0l4 4 4-4z" fill="#888"/></svg></div>
          </div>
          <div class="sb hbar d-flex justify-content-between align-items-center ps-2 border-top border-white">
            <svg width="4" height="8"><path d="M4 0L0 4l4 4z" fill="#888"/></svg><svg width="4" height="8"><path d="M0 0l4 4-4 4z" fill="#888"/></svg></div>
        </div>
        <button class="okbtn" aria-label="Apply"><svg class="ic"><use href="#i-check"/></svg></button>
      </div>
    </section>
  </div>
</main>

<footer class="status d-flex align-items-center flex-shrink-0">
  <span class="flex-grow-1 text-nowrap overflow-hidden">Left-click to insert the object 'Connector'. Hold down the &lt;Ctrl&gt; key to insert multiple objects.</span>
  <span class="key">CAP</span><span class="key text-white">NUM</span><span class="key">SCRL</span><span class="key"><svg width="12" height="12"><path d="M8 2h2M5 6h2m1 0h2M2 10h2m1 0h2m1 0h2" stroke="#bbb" stroke-width="2"/></svg></span>
</footer>

<script src="https://cdn.jsdelivr.net/npm/bootstrap@5.3.0/dist/js/bootstrap.bundle.min.js"></script>
</body>
</html>
